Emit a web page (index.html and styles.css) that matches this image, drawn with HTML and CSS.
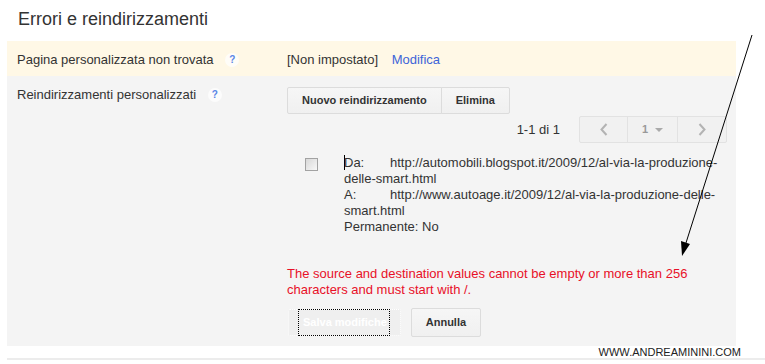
FILE: index.html
```html
<!DOCTYPE html>
<html lang="it">
<head>
    <meta charset="UTF-8">
    <title>Errori e reindirizzamenti</title>
    <link rel="stylesheet" href="styles.css">
</head>
<body>
    <h1 class="page-title">Errori e reindirizzamenti</h1>

    <div class="settings">
        <div class="setting-row setting-row-highlight">
            <div class="setting-label">Pagina personalizzata non trovata <span class="help">?</span></div>
            <div class="setting-value">[Non impostato] <a class="link" href="#">Modifica</a></div>
        </div>

        <div class="setting-row">
            <div class="setting-label">Reindirizzamenti personalizzati <span class="help">?</span></div>
            <div class="setting-value">
                <div class="btn-group">
                    <button type="button" class="btn">Nuovo reindirizzamento</button>
                    <button type="button" class="btn">Elimina</button>
                </div>

                <div class="pager-row">
                    <span>1-1 di 1</span>
                    <div class="pager">
                        <span class="pager-item pager-prev">
                            <svg width="8" height="13" viewBox="0 0 8 13"><polyline points="6.5,1 1.5,6.5 6.5,12" fill="none" stroke="#b3b3b3" stroke-width="2"/></svg>
                        </span>
                        <span class="pager-item pager-page">1 <span class="pager-caret"></span></span>
                        <span class="pager-item pager-next">
                            <svg width="8" height="13" viewBox="0 0 8 13"><polyline points="1.5,1 6.5,6.5 1.5,12" fill="none" stroke="#b3b3b3" stroke-width="2"/></svg>
                        </span>
                    </div>
                </div>

                <div class="redirect">
                    <input type="checkbox" class="redirect-check">
                    <div class="redirect-text"><span class="text-caret"></span><span class="redirect-key">Da:</span>http://automobili.blogspot.it/2009/12/al-via-la-produzione-delle-smart.html<br><span class="redirect-key">A:</span>http://www.autoage.it/2009/12/al-via-la-produzione-delle-smart.html<br>Permanente: No</div>
                </div>

                <p class="error">The source and destination values cannot be empty or more than 256 characters and must start with /.</p>

                <div class="form-actions">
                    <button type="button" class="btn btn-disabled"><span class="focus-ring">Salva modifiche</span></button>
                    <button type="button" class="btn btn-tall">Annulla</button>
                </div>
            </div>
        </div>
    </div>

    <div class="footer">WWW.ANDREAMININI.COM</div>

    <!-- annotation arrow drawn over the page -->
    <svg class="annotation" width="765" height="364" viewBox="0 0 765 364">
        <line x1="752" y1="35" x2="685" y2="246" stroke="#000" stroke-width="1"/>
        <polygon points="682,256 690,244 681,241" fill="#000"/>
    </svg>
</body>
</html>
```

FILE: styles.css
```css
* {
    margin: 0;
    padding: 0;
    box-sizing: border-box;
}

body {
    position: relative;
    background: #fff;
    color: #333;
    font-family: 'Liberation Sans', Arial, sans-serif;
    font-size: 13px;
    line-height: 15px;
    width: 765px;
    height: 364px;
    overflow: hidden;
}

.page-title {
    font-size: 18px;
    font-weight: normal;
    line-height: 21px;
    color: #333;
    padding: 9px 0 0 18px;
    margin-bottom: 11px;
}

.settings {
    margin-left: 7px;
    width: 729px;
    background: #f4f4f4;
}

.setting-row {
    display: flex;
    padding: 11px 9px 9px 0;
}

.setting-row-highlight {
    background: #fff8e6;
}

.setting-label {
    flex: 0 0 280px;
    padding-left: 10px;
}

.setting-value {
    flex: 1;
}

.help {
    display: inline-block;
    width: 14px;
    height: 14px;
    margin-left: 8px;
    border-radius: 50%;
    background: rgba(255, 255, 255, 0.7);
    color: #5a86e6;
    font-size: 10px;
    font-weight: bold;
    line-height: 13px;
    text-align: center;
    vertical-align: 1px;
}

.link {
    margin-left: 10px;
    color: #3d64d8;
    text-decoration: none;
}

.btn {
    height: 27px;
    padding: 0 14px;
    border: 1px solid #dcdcdc;
    border-radius: 2px;
    background: linear-gradient(#f6f6f6, #f0f0f0);
    color: #333;
    font-family: 'Liberation Sans', Arial, sans-serif;
    font-size: 11px;
    font-weight: bold;
    line-height: 25px;
}

.btn-group {
    display: flex;
}

.btn-group .btn + .btn {
    margin-left: -1px;
    border-radius: 0 2px 2px 0;
}

.btn-group .btn:first-child {
    border-radius: 2px 0 0 2px;
}

.pager-row {
    display: flex;
    justify-content: flex-end;
    align-items: center;
    gap: 19px;
    height: 27px;
    margin-top: 2px;
}

.pager {
    display: flex;
    height: 27px;
    border: 1px solid #e2e2e2;
    border-radius: 2px;
    background: #f1f1f1;
}

.pager-item {
    display: flex;
    align-items: center;
    justify-content: center;
}

.pager-item + .pager-item {
    border-left: 1px solid #e2e2e2;
}

.pager-prev {
    width: 47px;
}

.pager-page {
    width: 50px;
    gap: 7px;
    color: #999;
    font-size: 11px;
    font-weight: bold;
}

.pager-next {
    width: 49px;
}

.pager-caret {
    width: 0;
    height: 0;
    border-left: 4px solid transparent;
    border-right: 4px solid transparent;
    border-top: 4px solid #aaa;
}

.redirect {
    display: flex;
    gap: 26px;
    margin-top: 12px;
    padding-left: 18px;
}

.redirect-check {
    appearance: none;
    flex: 0 0 13px;
    width: 13px;
    height: 13px;
    margin-top: 3px;
    border: 1px solid #a2a2a2;
    background: linear-gradient(135deg, #d8d8d8, #f8f8f8);
}

.redirect-text {
    flex: 1;
    line-height: 16px;
}

.text-caret {
    display: inline-block;
    width: 1px;
    height: 15px;
    margin-right: -1px;
    background: #000;
    vertical-align: -3px;
}

.redirect-key {
    display: inline-block;
    width: 46px;
}

.error {
    margin-top: 31px;
    color: #e81028;
    line-height: 16px;
}

.form-actions {
    display: flex;
    align-items: center;
    gap: 10px;
    height: 29px;
    margin-top: 10px;
}

.btn-disabled {
    margin-left: 1px;
    padding: 0 10px 0 9px;
    border: 1px dotted #fff;
    background: #efefef;
    color: #fff;
}

.focus-ring {
    display: block;
    padding: 0 2px 0 4px;
    border: 1px dotted #000;
    line-height: 25px;
    margin: -1px 0;
}

.btn-tall {
    height: 29px;
    line-height: 27px;
}

.footer {
    margin-left: 7px;
    height: 14px;
    padding-right: 24px;
    border-bottom: 2px solid #ececec;
    color: #222;
    font-size: 11px;
    line-height: 12px;
    text-align: right;
}

.annotation {
    position: absolute;
    top: 0;
    left: 0;
    pointer-events: none;
}
```
